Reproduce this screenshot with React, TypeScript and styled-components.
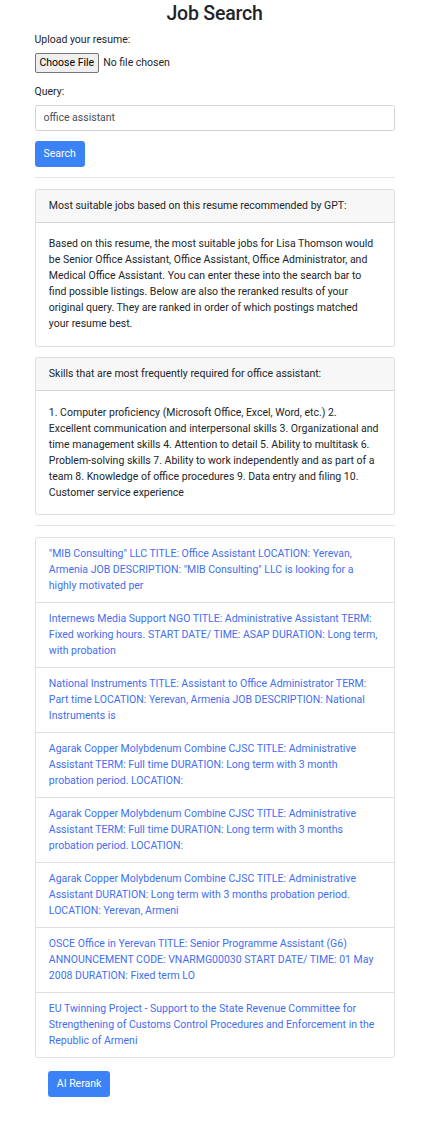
import React from 'react';
import styled, { createGlobalStyle } from 'styled-components';

const GlobalStyle = createGlobalStyle`
  html, body {
    margin: 0;
    padding: 0;
    background: #fff;
  }
  body {
    font-family: Roboto, "Noto Sans", sans-serif;
    font-size: 10.5px;
    line-height: 16px;
    color: #212529;
  }
  * {
    box-sizing: border-box;
  }
`;

const Container = styled.div`
  width: 360px;
  margin: 0 auto;
`;

const Title = styled.h2`
  margin: 0 0 5.33px;
  padding-top: 1px;
  font-size: 19.5px;
  line-height: 25.6px;
  font-weight: 500;
  letter-spacing: -0.2px;
  text-align: center;
`;

const FormGroup = styled.div`
  margin-bottom: 10.67px;
`;

const Label = styled.label`
  display: block;
  margin-bottom: 5.33px;
`;

const FileInput = styled.input`
  display: block;
  width: 100%;
  font: inherit;
  color: #212529;
  &::file-selector-button {
    font: inherit;
    color: #000;
    padding: 1px 4px;
    margin-right: 4px;
    border: 1px solid #767676;
    border-radius: 2px;
    background: #efefef;
  }
`;

const TextInput = styled.input`
  display: block;
  width: 100%;
  height: 25.33px;
  padding: 4px 8px;
  font: inherit;
  color: #495057;
  border: 1px solid #ced4da;
  border-radius: 2.67px;
  outline: none;
`;

const Button = styled.button<{ $offset?: boolean }>`
  display: inline-block;
  height: 25.33px;
  padding: 4px 8px;
  margin: ${(p) => (p.$offset ? '13.33px 0 0 13.33px' : '0')};
  font: inherit;
  color: #fff;
  background: #3b82f6;
  border: 1px solid #3b82f6;
  border-radius: 2.67px;
  cursor: pointer;
`;

const Divider = styled.hr`
  margin: 10.67px 0;
  border: 0;
  border-top: 1px solid rgba(0, 0, 0, 0.1);
`;

const Card = styled.div`
  border: 1px solid rgba(0, 0, 0, 0.125);
  border-radius: 2.67px;
  margin-bottom: 10.67px;
  &:last-of-type {
    margin-bottom: 0;
  }
`;

const CardHeader = styled.div`
  padding: 8px 13.33px;
  background: rgba(0, 0, 0, 0.03);
  border-bottom: 1px solid rgba(0, 0, 0, 0.125);
`;

const CardBody = styled.div`
  padding: 13.33px;
`;

const ListGroup = styled.ul`
  list-style: none;
  margin: 0;
  padding: 0;
  border: 1px solid rgba(0, 0, 0, 0.125);
  border-radius: 2.67px;
`;

const ListItem = styled.li`
  padding: 8px 13.33px;
  border-top: 1px solid rgba(0, 0, 0, 0.125);
  &:first-child {
    border-top: 0;
  }
`;

const JobLink = styled.a`
  color: #3f6ef3;
  text-decoration: none;
`;

const jobs = [
  '"MIB Consulting" LLC TITLE: Office Assistant LOCATION: Yerevan, Armenia JOB DESCRIPTION: "MIB Consulting" LLC is looking for a highly motivated per',
  'Internews Media Support NGO TITLE: Administrative Assistant TERM: Fixed working hours. START DATE/ TIME: ASAP DURATION: Long term, with probation',
  'National Instruments TITLE: Assistant to Office Administrator TERM: Part time LOCATION: Yerevan, Armenia JOB DESCRIPTION: National Instruments is',
  'Agarak Copper Molybdenum Combine CJSC TITLE: Administrative Assistant TERM: Full time DURATION: Long term with 3 month probation period. LOCATION:',
  'Agarak Copper Molybdenum Combine CJSC TITLE: Administrative Assistant TERM: Full time DURATION: Long term with 3 months probation period. LOCATION:',
  'Agarak Copper Molybdenum Combine CJSC TITLE: Administrative Assistant DURATION: Long term with 3 months probation period. LOCATION: Yerevan, Armeni',
  'OSCE Office in Yerevan TITLE: Senior Programme Assistant (G6) ANNOUNCEMENT CODE: VNARMG00030 START DATE/ TIME: 01 May 2008 DURATION: Fixed term LO',
  'EU Twinning Project - Support to the State Revenue Committee for Strengthening of Customs Control Procedures and Enforcement in the Republic of Armeni',
];

const App: React.FC = () => {
  return (
    <>
      <GlobalStyle />
      <Container>
        <Title>Job Search</Title>
        <FormGroup>
          <Label htmlFor="resume">Upload your resume:</Label>
          <FileInput id="resume" type="file" />
        </FormGroup>
        <FormGroup>
          <Label htmlFor="query">Query:</Label>
          <TextInput id="query" type="text" defaultValue="office assistant" />
        </FormGroup>
        <Button type="button">Search</Button>
        <Divider />
        <Card>
          <CardHeader>Most suitable jobs based on this resume recommended by GPT:</CardHeader>
          <CardBody>
            Based on this resume, the most suitable jobs for Lisa Thomson would be Senior Office
            Assistant, Office Assistant, Office Administrator, and Medical Office Assistant. You can
            enter these into the search bar to find possible listings. Below are also the reranked
            results of your original query. They are ranked in order of which postings matched your
            resume best.
          </CardBody>
        </Card>
        <Card>
          <CardHeader>Skills that are most frequently required for office assistant:</CardHeader>
          <CardBody>
            1. Computer proficiency (Microsoft Office, Excel, Word, etc.) 2. Excellent communication
            and interpersonal skills 3. Organizational and time management skills 4. Attention to
            detail 5. Ability to multitask 6. Problem-solving skills 7. Ability to work independently
            and as part of a team 8. Knowledge of office procedures 9. Data entry and filing 10.
            Customer service experience
          </CardBody>
        </Card>
        <Divider />
        <ListGroup>
          {jobs.map((job, i) => (
            <ListItem key={i}>
              <JobLink href="#">{job}</JobLink>
            </ListItem>
          ))}
        </ListGroup>
        <Button type="button" $offset>
          AI Rerank
        </Button>
      </Container>
    </>
  );
};

export default App;
